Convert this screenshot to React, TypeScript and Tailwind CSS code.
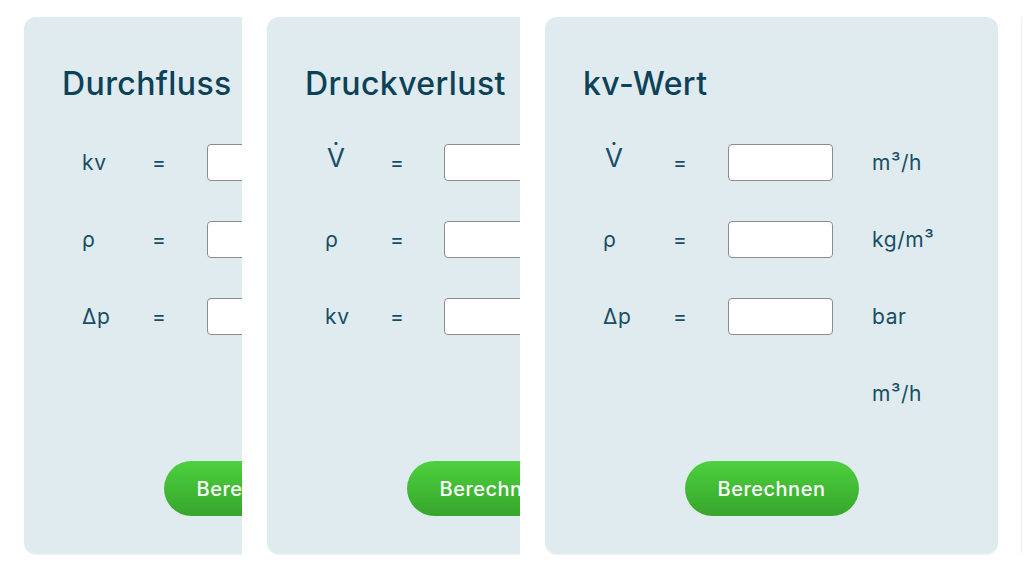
import React from "react";

type Row = { label: string; big?: boolean; unit: string };
type CardData = { title: string; rows: Row[]; result: string; narrow?: boolean };

const cards: CardData[] = [
  {
    title: "Durchfluss",
    rows: [
      { label: "kv", unit: "" },
      { label: "ρ", unit: "kg/m³" },
      { label: "Δp", unit: "bar" },
    ],
    result: "m³/h",
  },
  {
    title: "Druckverlust",
    narrow: true,
    rows: [
      { label: "V̇", big: true, unit: "m³/h" },
      { label: "ρ", unit: "kg/m³" },
      { label: "kv", unit: "" },
    ],
    result: "bar",
  },
  {
    title: "kv-Wert",
    rows: [
      { label: "V̇", big: true, unit: "m³/h" },
      { label: "ρ", unit: "kg/m³" },
      { label: "Δp", unit: "bar" },
    ],
    result: "m³/h",
  },
];

function Card({ data }: { data: CardData }) {
  return (
    <div className="w-[453px] h-[537px] shrink-0 rounded-xl bg-[#e0ebf0] shadow-[0_1px_2px_rgba(0,0,0,0.06)] flex flex-col">
      <h2 className="pl-[38px] pt-[49px] text-[32px] leading-[36px] font-medium text-[#0c4257] tracking-[0.4px]">
        {data.title}
      </h2>
      <div className="mt-[22px] flex flex-col">
        {data.rows.map((r, i) => (
          <div
            key={i}
            className="h-[77px] flex items-center pl-[58px] text-[21px] tracking-[0.6px] text-[#184e63]"
          >
            <div
              className={
                (data.narrow ? "w-[65px] " : "w-[70px] ") +
                (r.big ? "text-[26px] leading-none mb-[10px] pl-[2px]" : "")
              }
            >
              {r.label}
            </div>
            <div className={data.narrow ? "w-[54px]" : "w-[55px]"}>=</div>
            <input
              type="text"
              className="w-[105px] h-[37px] bg-white border border-[#8c8c8c] rounded-[4px] shrink-0"
            />
            <div className="ml-[39px]">{r.unit}</div>
          </div>
        ))}
        <div className="h-[77px] flex items-center pl-[327px] text-[21px] tracking-[0.6px] text-[#184e63]">
          {data.result}
        </div>
      </div>
      <div className="mt-[29px] flex justify-center">
        <button className="w-[174px] h-[55px] rounded-full bg-gradient-to-b from-[#4dd13f] to-[#37a52b] text-white text-[20px] tracking-[0.5px] font-medium">
          Berechnen
        </button>
      </div>
    </div>
  );
}

export default function App() {
  return (
    <div
      className="w-[1024px] h-[576px] bg-white flex overflow-hidden"
      style={{ fontFamily: "Inter, 'Open Sans', sans-serif" }}
    >
      <div className="w-[242px] shrink-0 pl-[24px] pt-[17px] overflow-hidden bg-white">
        <Card data={cards[0]} />
      </div>
      <div className="w-[278px] shrink-0 pl-[25px] pt-[17px] overflow-hidden bg-white">
        <Card data={cards[1]} />
      </div>
      <div className="w-[478px] shrink-0 pl-[25px] pt-[17px] overflow-hidden bg-white">
        <Card data={cards[2]} />
      </div>
      <div className="ml-[23px] mt-[17px] w-px h-[537px] bg-[#f1f3f4]" />
    </div>
  );
}
